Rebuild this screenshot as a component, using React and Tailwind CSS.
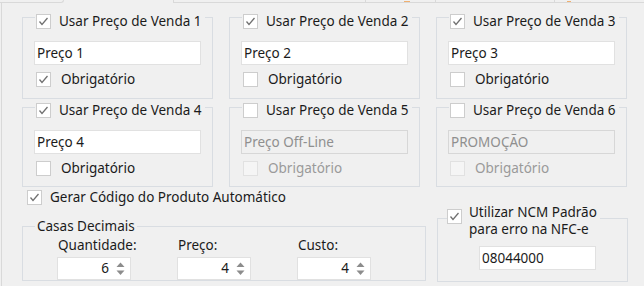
import React from "react";

function Check({ checked, disabled }) {
  return (
    <span
      className={`w-[15px] h-[15px] shrink-0 border flex items-center justify-center ${
        disabled ? "bg-[#f5f5f5] border-[#e1e1e1]" : "bg-white border-[#cdcdcd]"
      }`}
    >
      {checked && (
        <svg width="13" height="13" viewBox="0 0 13 13">
          <polyline points="2.5,6.5 5,9.5 10.5,3" fill="none" stroke="#707070" strokeWidth="1.3" />
        </svg>
      )}
    </span>
  );
}

function Edit({ value, disabled, className }) {
  return (
    <div
      className={`h-[24px] border flex items-center pl-[2px] ${
        disabled ? "bg-[#f0f0f0] border-[#d7d7d7] text-[#8f8f8f]" : "bg-white border-[#e1e1e1]"
      } ${className}`}
    >
      {value}
    </div>
  );
}

function PriceGroup({ n, checked, value, required, disabled, row }) {
  return (
    <div
      className={`w-[191px] border border-[#d9dde2] flex flex-col ${row === 1 ? "h-[82px]" : "h-[80px]"}`}
    >
      <div
        className={`self-start ml-[12px] px-[1px] h-[17px] bg-[#f0f0f0] flex items-center gap-[8px] pr-[3px] ${
          row === 1 ? "-mt-[5px]" : "-mt-[6px]"
        }`}
      >
        <Check checked={checked} />
        <span>Usar Preço de Venda {n}</span>
      </div>
      <Edit value={value} disabled={disabled} className="mt-[11px] ml-[11px] w-[167px]" />
      <div className="mt-[6px] ml-[13px] h-[17px] flex items-center gap-[10px]">
        <Check checked={required} disabled={disabled} />
        <span className={disabled ? "text-[#9a9a9a]" : ""}>Obrigatório</span>
      </div>
    </div>
  );
}

function Spin({ value }) {
  return (
    <div className="w-[74px] h-[23px] bg-white border border-[#e1e1e1] flex items-center justify-end pr-[5px] gap-[7px]">
      <span>{value}</span>
      <svg width="9" height="17" viewBox="0 0 9 17">
        <polygon points="0.5,7 4.5,2.5 8.5,7" fill="#8c8c8c" />
        <polygon points="0.5,10.5 4.5,15 8.5,10.5" fill="#8c8c8c" />
      </svg>
    </div>
  );
}

export default function App() {
  return (
    <div className="w-[644px] h-[286px] bg-[#f0f0f0] overflow-hidden flex flex-col font-['Noto_Sans',sans-serif] text-[13.5px] leading-[17px] text-[#1b1b1b]">
      <div className="h-[3px] flex shrink-0">
        <div className="w-[64px] border-b border-r border-[#d9d9d9] rounded-br-[3px]" />
        <div className="w-[109px]" />
        <div className="w-[192px] border-b border-l border-[#d9d9d9]" />
        <div className="w-[70px] border-b border-l border-[#d9d9d9] flex items-end">
          <span className="ml-[38px] w-[6px] h-[1px] bg-[#f0b070]" />
        </div>
        <div className="w-[119px] border-b border-l border-[#d9d9d9]" />
        <div className="flex-1 border-b border-l border-[#d9d9d9] flex items-end">
          <span className="ml-[12px] w-[4px] h-[1px] bg-[#f0b070]" />
        </div>
      </div>

      <div className="flex-1 ml-[1px] border-l border-[#d9d9d9] pl-[20px] pt-[14px] flex flex-col">
        <div className="flex gap-[16px]">
          <PriceGroup row={1} n={1} checked value="Preço 1" required />
          <PriceGroup row={1} n={2} checked value="Preço 2" />
          <PriceGroup row={1} n={3} checked value="Preço 3" />
        </div>
        <div className="flex gap-[16px] mt-[8px]">
          <PriceGroup row={2} n={4} checked value="Preço 4" />
          <PriceGroup row={2} n={5} value="Preço Off-Line" disabled />
          <PriceGroup row={2} n={6} value="PROMOÇÃO" disabled />
        </div>

        <div className="flex items-start">
          <div className="w-[404px] flex flex-col">
            <div className="mt-[2px] ml-[5px] h-[17px] flex items-center gap-[8px]">
              <Check checked />
              <span>Gerar Código do Produto Automático</span>
            </div>
            <div className="mt-[20px] h-[55px] border border-[#d9dde2] flex flex-col">
              <div className="self-start -mt-[9px] ml-[12px] px-[2px] h-[17px] bg-[#f0f0f0]">Casas Decimais</div>
              <div className="mt-[2px] ml-[34px] flex">
                {[
                  ["Quantidade:", "6"],
                  ["Preço:", "4"],
                  ["Custo:", "4"],
                ].map(([label, v]) => (
                  <div key={label} className="w-[120px] flex flex-col">
                    <span className="pl-[1px]">{label}</span>
                    <div className="mt-[3px]">
                      <Spin value={v} />
                    </div>
                  </div>
                ))}
              </div>
            </div>
          </div>

          <div className="ml-[11px] mt-[31px] w-[191px] h-[64px] border border-[#d9dde2] flex flex-col">
            <div className="self-start -mt-[15px] ml-[9px] flex items-start gap-[7px] bg-[#f0f0f0] pr-[3px]">
              <span className="mt-[5px]">
                <Check checked />
              </span>
              <span className="leading-[17px]">
                Utilizar NCM Padrão
                <br />
                para erro na NFC-e
              </span>
            </div>
            <Edit value="08044000" className="mt-[8px] ml-[41px] w-[117px]" />
          </div>
        </div>
      </div>
    </div>
  );
}
